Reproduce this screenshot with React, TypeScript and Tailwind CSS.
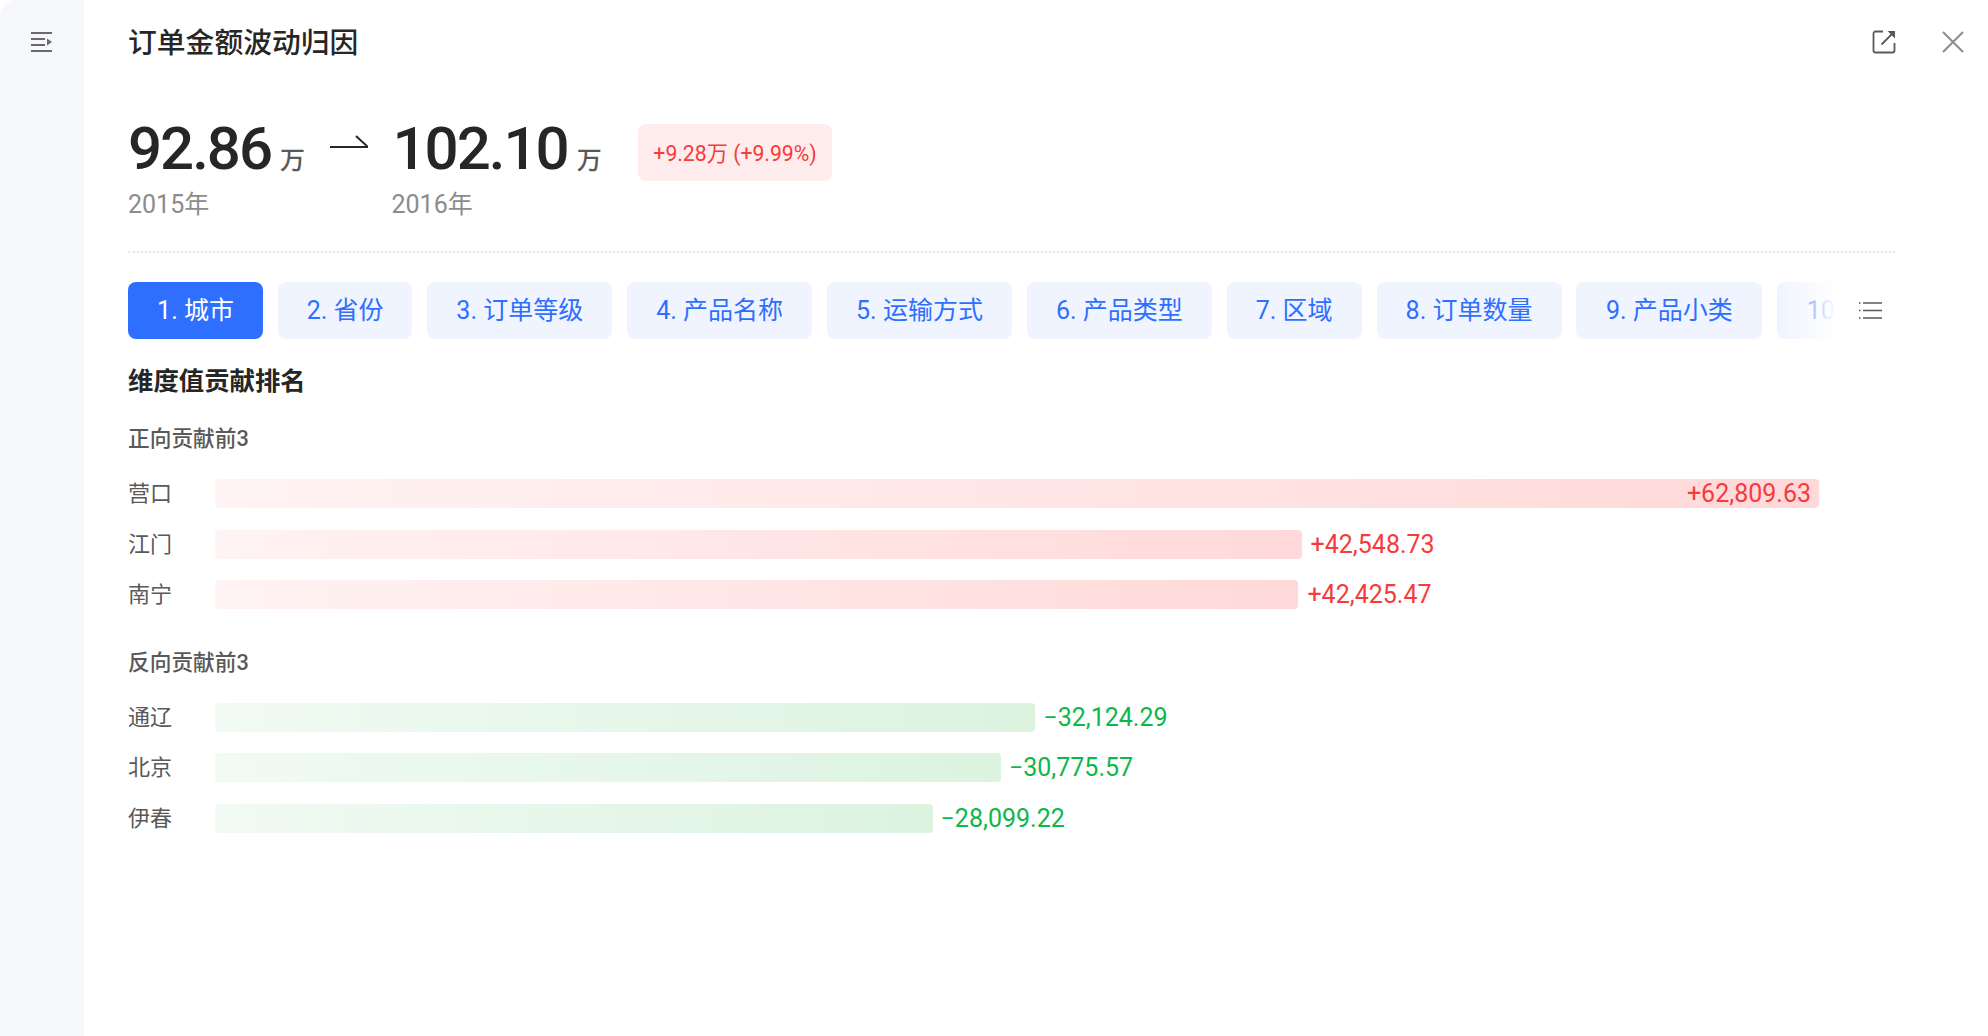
import React from "react";

const FONT = "font-['Roboto','Noto_Sans_CJK_SC',sans-serif]";

const tabs = [
  { label: "1. 城市", w: "w-[135px]" },
  { label: "2. 省份", w: "w-[134.6px]" },
  { label: "3. 订单等级", w: "w-[185px]" },
  { label: "4. 产品名称", w: "w-[185px]" },
  { label: "5. 运输方式", w: "w-[185px]" },
  { label: "6. 产品类型", w: "w-[185px]" },
  { label: "7. 区域", w: "w-[135px]" },
  { label: "8. 订单数量", w: "w-[185px]" },
  { label: "9. 产品小类", w: "w-[186px]" },
  { label: "10. 产品子类", w: "w-[200px]" },
];

const MAX = 62809.63;
const FULL = 1604;

const positive = [
  { name: "营口", value: 62809.63, text: "+62,809.63" },
  { name: "江门", value: 42548.73, text: "+42,548.73" },
  { name: "南宁", value: 42425.47, text: "+42,425.47" },
];
const negative = [
  { name: "通辽", value: 32124.29, text: "−32,124.29" },
  { name: "北京", value: 30775.57, text: "−30,775.57" },
  { name: "伊春", value: 28099.22, text: "−28,099.22" },
];

function Row({ name, value, text, up }: { name: string; value: number; text: string; up: boolean }) {
  const width = (value / MAX) * FULL;
  const inside = value === MAX;
  return (
    <div className="flex h-[29px] items-center">
      <div className="w-[87px] shrink-0 text-[22px] leading-[29px] text-[#595959]">{name}</div>
      <div
        className={`flex h-[29px] items-center justify-end rounded-[4px] bg-gradient-to-r ${
          up ? "from-[#fff3f3] to-[#ffd9d9]" : "from-[#f1faf3] to-[#dcf3e0]"
        }`}
        style={{ width }}
      >
        {inside && <span className="pr-[8px] text-[25px] leading-[29px] text-[#f53b3b]">{text}</span>}
      </div>
      {!inside && (
        <span className={`text-[25px] leading-[29px] ${up ? "pl-[9px] text-[#f53b3b]" : "pl-[8px] text-[#0bb84a]"}`}>{text}</span>
      )}
    </div>
  );
}

export default function App() {
  return (
    <div className={`flex h-[1036px] w-[1988px] overflow-hidden bg-white ${FONT}`}>
      <aside className="flex w-[84px] shrink-0 justify-center rounded-tl-[16px] bg-[#f6f8fc] pt-[32px]">
        <svg width="22" height="20" viewBox="0 0 22 20" fill="none" className="ml-[-1px]">
          <path d="M0 1h21M0 19h21M0 7h14M0 13h14" stroke="#6b6b6b" strokeWidth="1.8" />
          <path d="M16 6.5l5 3.5-5 3.5z" fill="#6b6b6b" />
        </svg>
      </aside>
      <main className="min-w-0 flex-1 pl-[44px]">
        <header className="flex h-[84px] items-center pr-[24px] pt-[1px]">
          <h1 className="flex-1 text-[28.8px] font-medium leading-[40px] text-[#262626]">订单金额波动归因</h1>
          <svg width="24" height="24" viewBox="0 0 24 24" fill="none" className="mr-[46px] mt-[-1px]">
            <path d="M11 1.5H3.5a2 2 0 0 0-2 2v17a2 2 0 0 0 2 2h17a2 2 0 0 0 2-2V13" stroke="#595959" strokeWidth="1.8" />
            <path d="M9.5 14.5L21 3" stroke="#595959" strokeWidth="1.8" />
            <path d="M15.5 1h7.5v7.5z" fill="#595959" />
          </svg>
          <svg width="22" height="22" viewBox="0 0 22 22" fill="none" className="mt-[-1px]">
            <path d="M1 1l20 20M21 1L1 21" stroke="#8c8c8c" strokeWidth="2" />
          </svg>
        </header>

        <div className="mr-[93px]">
          <section className="flex h-[169px] flex-col border-b-2 border-dotted border-[#e8e8e8]">
            <div className="flex items-start pt-[37px]">
              <div className="w-[202px]">
                <div className="flex items-baseline">
                  <span className="text-[60px] font-medium leading-[56px] tracking-[-2px] text-[#262626]">92.86</span>
                  <span className="ml-[9px] text-[25px] font-medium leading-[30px] text-[#595959]">万</span>
                </div>
                <div className="mt-[12px] text-[25px] leading-[32px] text-[#8c8c8c]">2015年</div>
              </div>
              <svg width="38" height="18" viewBox="0 0 38 18" fill="none" className="mt-[12px] mr-[23.5px] shrink-0">
                <path d="M0 14h38L26 3" stroke="#262626" strokeWidth="2" />
              </svg>
              <div className="w-[246.5px]">
                <div className="flex items-baseline pl-[1px]">
                  <span className="text-[60px] font-medium leading-[56px] tracking-[-2px] text-[#262626]">102.10</span>
                  <span className="ml-[9px] text-[25px] font-medium leading-[30px] text-[#595959]">万</span>
                </div>
                <div className="mt-[12px] text-[25px] leading-[32px] text-[#8c8c8c]">2016年</div>
              </div>
              <div className="mt-[3px] flex h-[57px] w-[194px] items-center justify-center rounded-[8px] bg-[#ffecec] pt-[2px] text-[21.2px] text-[#f53b3b]">
                +9.28万 (+9.99%)
              </div>
            </div>
          </section>

          <div className="relative mt-[29px] h-[57px] overflow-hidden">
            <div className="flex gap-[14.85px]">
              {tabs.map((t, i) => (
                <div
                  key={t.label}
                  className={`flex h-[57px] shrink-0 items-center justify-center whitespace-nowrap rounded-[8px] text-[25px] ${t.w} ${
                    i === 0 ? "bg-[#2e6fff] text-white" : "bg-[#eff4fe] text-[#2e6fff]"
                  }`}
                >
                  {t.label}
                </div>
              ))}
            </div>
            <div className="absolute inset-y-0 right-0 flex w-[118px] items-center justify-end bg-gradient-to-r from-[#ffffff00] via-[#ffffff] via-[50%] to-[#ffffff] pr-[13px]">
              <svg width="23" height="17" viewBox="0 0 23 17" fill="none">
                <path d="M4 1h19M4 8.5h19M4 16h19" stroke="#595959" strokeWidth="1.6" />
                <path d="M0 1h2M0 8.5h2M0 16h2" stroke="#595959" strokeWidth="1.6" strokeDasharray="1.6 1" />
              </svg>
            </div>
          </div>

          <h2 className="mt-[25px] text-[25.4px] font-bold leading-[34px] text-[#262626]">维度值贡献排名</h2>

          <h3 className="mt-[26px] text-[21.7px] font-medium leading-[30px] text-[#595959]">正向贡献前3</h3>
          <div className="mt-[25px] flex flex-col gap-[21.5px]">
            {positive.map((r) => (
              <Row key={r.name} {...r} up />
            ))}
          </div>

          <h3 className="mt-[38.5px] text-[21.7px] font-medium leading-[30px] text-[#595959]">反向贡献前3</h3>
          <div className="mt-[25px] flex flex-col gap-[21.5px]">
            {negative.map((r) => (
              <Row key={r.name} {...r} up={false} />
            ))}
          </div>
        </div>
      </main>
    </div>
  );
}
